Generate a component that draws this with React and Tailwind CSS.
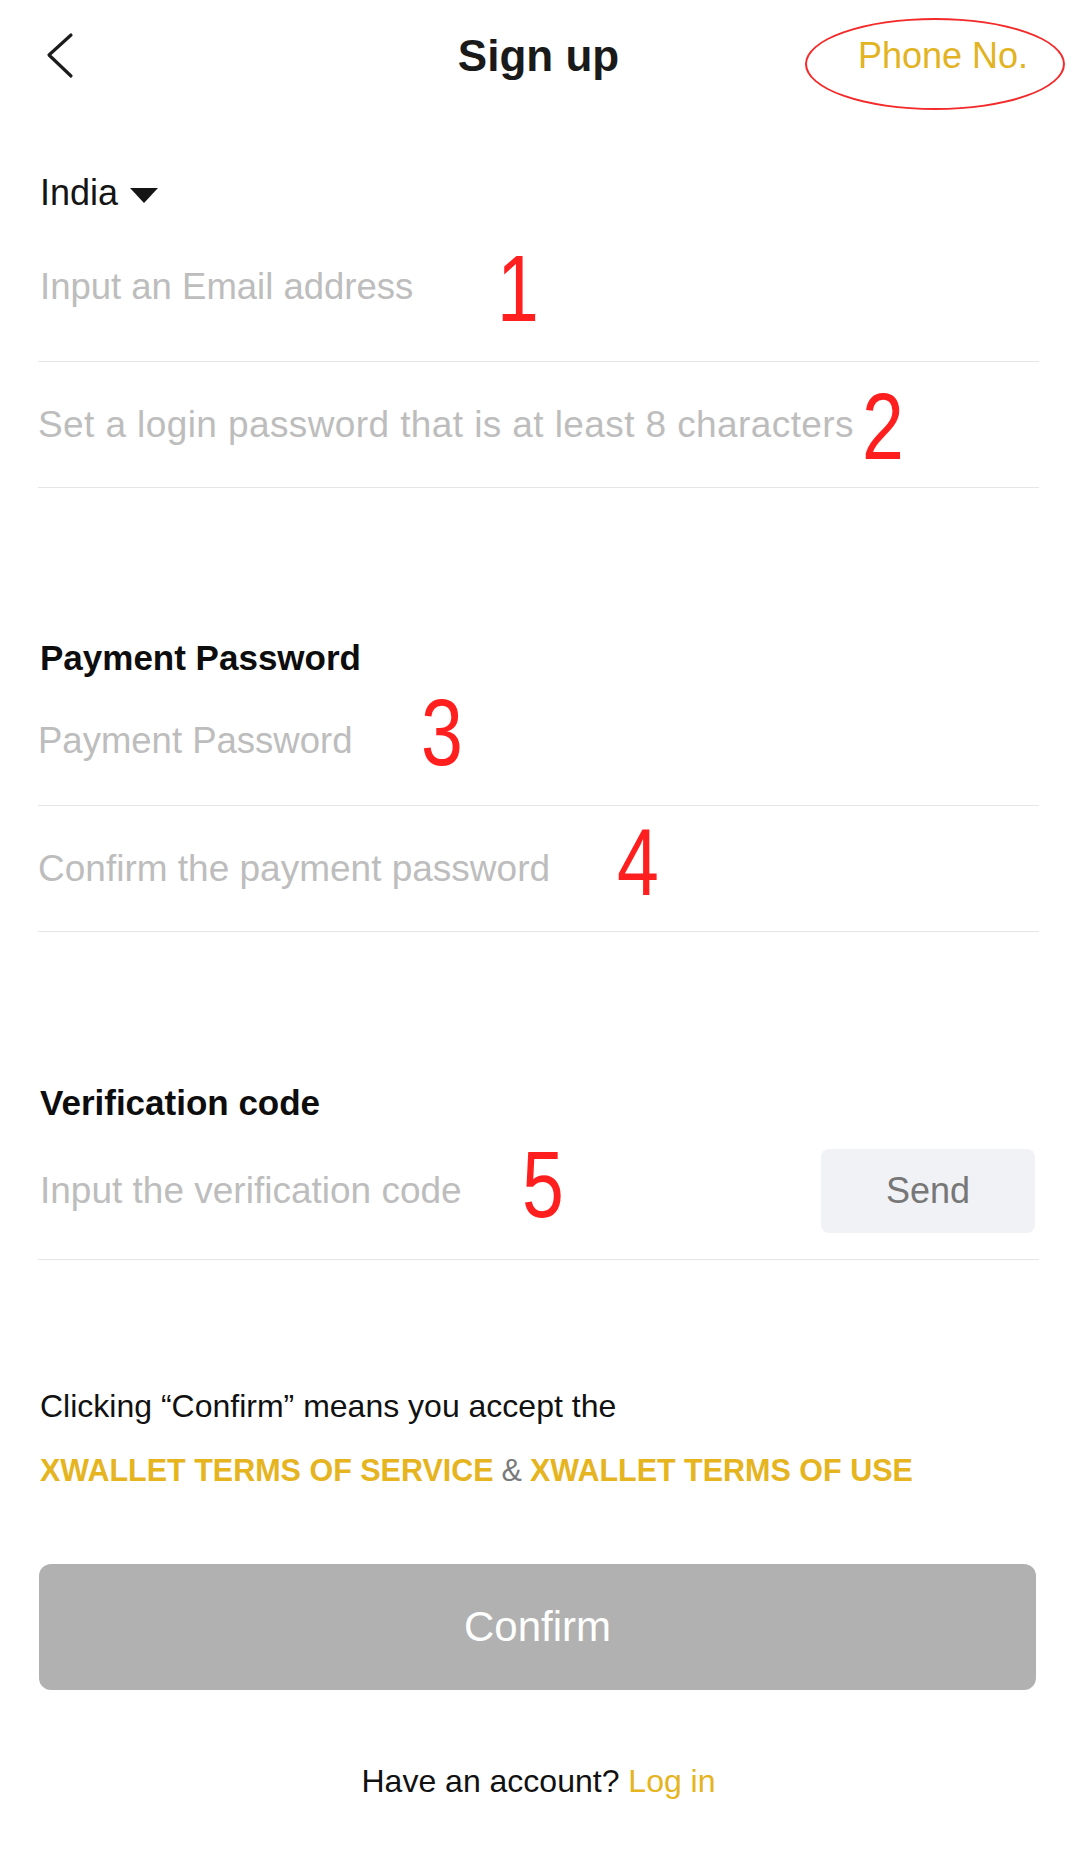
import React from "react";

const font = { fontFamily: '"Liberation Sans", Arial, sans-serif' };

function RedNum({ n, left, top }) {
  return (
    <div
      className="absolute text-[94px] leading-none text-[#ff1f1f] scale-x-[0.8] origin-left pointer-events-none"
      style={{ left, top }}
    >
      {n}
    </div>
  );
}

export default function App() {
  return (
    <div
      className="relative w-[1077px] h-[1865px] bg-white overflow-hidden"
      style={font}
    >
      {/* Header */}
      <div className="grid grid-cols-3 items-center h-[112px]">
        <div className="pl-[46px] flex items-center">
          <svg width="32" height="48" viewBox="0 0 32 48">
            <polyline
              points="25,3 3,23 25,44"
              fill="none"
              stroke="#1c1c1c"
              strokeWidth="3.2"
              strokeLinecap="round"
              strokeLinejoin="round"
            />
          </svg>
        </div>
        <div className="text-center text-[44px] font-bold text-[#1a1a1a] leading-none">
          Sign up
        </div>
        <div className="text-right pr-[49px] text-[36px] text-[#e2b322] leading-none">
          Phone No.
        </div>
      </div>

      {/* Red ellipse annotation */}
      <div className="absolute left-[805px] top-[18px] w-[260px] h-[92px] rounded-[50%] border-2 border-[#f42a2a]" />

      <div className="px-[38px]">
        {/* Country */}
        <div className="mt-[61px] h-[40px] flex items-center gap-[12px] pl-[2px]">
          <span className="text-[36px] text-[#151515] leading-none">India</span>
          <svg width="28" height="18" viewBox="0 0 28 18" className="mt-[4px]">
            <polygon points="0,2 28,2 14,17" fill="#151515" />
          </svg>
        </div>

        {/* Email */}
        <div className="h-[149px] flex items-center border-b border-[#e6e6e6] pl-[2px]">
          <span className="text-[36.5px] text-[#bdbdbd] leading-none">
            Input an Email address
          </span>
        </div>

        {/* Password */}
        <div className="h-[126px] flex items-center border-b border-[#e6e6e6]">
          <span className="text-[37px] tracking-[0.4px] text-[#bdbdbd] leading-none">
            Set a login password that is at least 8 characters
          </span>
        </div>

        {/* Payment Password */}
        <div className="mt-[149px] h-[40px] flex items-center pl-[2px]">
          <span className="text-[35px] font-bold text-[#0d0d0d] leading-none">
            Payment Password
          </span>
        </div>
        <div className="h-[129px] flex items-center border-b border-[#e6e6e6]">
          <span className="text-[36.5px] text-[#bdbdbd] leading-none">
            Payment Password
          </span>
        </div>
        <div className="h-[126px] flex items-center border-b border-[#e6e6e6]">
          <span className="text-[37px] text-[#bdbdbd] leading-none">
            Confirm the payment password
          </span>
        </div>

        {/* Verification code */}
        <div className="mt-[150px] h-[40px] flex items-center pl-[2px]">
          <span className="text-[35px] font-bold text-[#0d0d0d] leading-none">
            Verification code
          </span>
        </div>
        <div className="h-[138px] flex items-center justify-between border-b border-[#e6e6e6]">
          <span className="text-[37px] text-[#bdbdbd] leading-none pl-[2px]">
            Input the verification code
          </span>
          <div className="mr-[4px] w-[214px] h-[84px] rounded-[8px] bg-[#f1f2f5] flex items-center justify-center">
            <span className="text-[36px] text-[#777777] leading-none">Send</span>
          </div>
        </div>

        {/* Terms */}
        <div className="mt-[126px] h-[40px] flex items-center pl-[2px]">
          <span className="text-[32px] text-[#111111] leading-none">
            Clicking “Confirm” means you accept the
          </span>
        </div>
        <div className="mt-[24px] h-[40px] flex items-center pl-[2px]">
          <span className="text-[30.5px] font-semibold text-[#e5b41f] leading-none">
            XWALLET TERMS OF SERVICE
          </span>
          <span className="text-[30.5px] text-[#7a7a7a] leading-none mx-[8px]">&amp;</span>
          <span className="text-[30.5px] font-semibold text-[#e5b41f] leading-none">
            XWALLET TERMS OF USE
          </span>
        </div>

        {/* Confirm button */}
        <div className="mt-[74px] ml-[1px] mr-[3px] h-[126px] rounded-[12px] bg-[#b1b1b1] flex items-center justify-center">
          <span className="text-[42px] text-white leading-none">Confirm</span>
        </div>

        {/* Login */}
        <div className="mt-[71px] h-[40px] flex items-center justify-center">
          <span className="text-[32px] text-[#111111] leading-none">
            Have an account?{" "}
            <span className="text-[#e5b41f]">Log in</span>
          </span>
        </div>
      </div>

      {/* Red annotation numbers */}
      <RedNum n="1" left={497} top={242} />
      <RedNum n="2" left={862} top={380} />
      <RedNum n="3" left={421} top={686} />
      <RedNum n="4" left={617} top={816} />
      <RedNum n="5" left={522} top={1138} />
    </div>
  );
}
